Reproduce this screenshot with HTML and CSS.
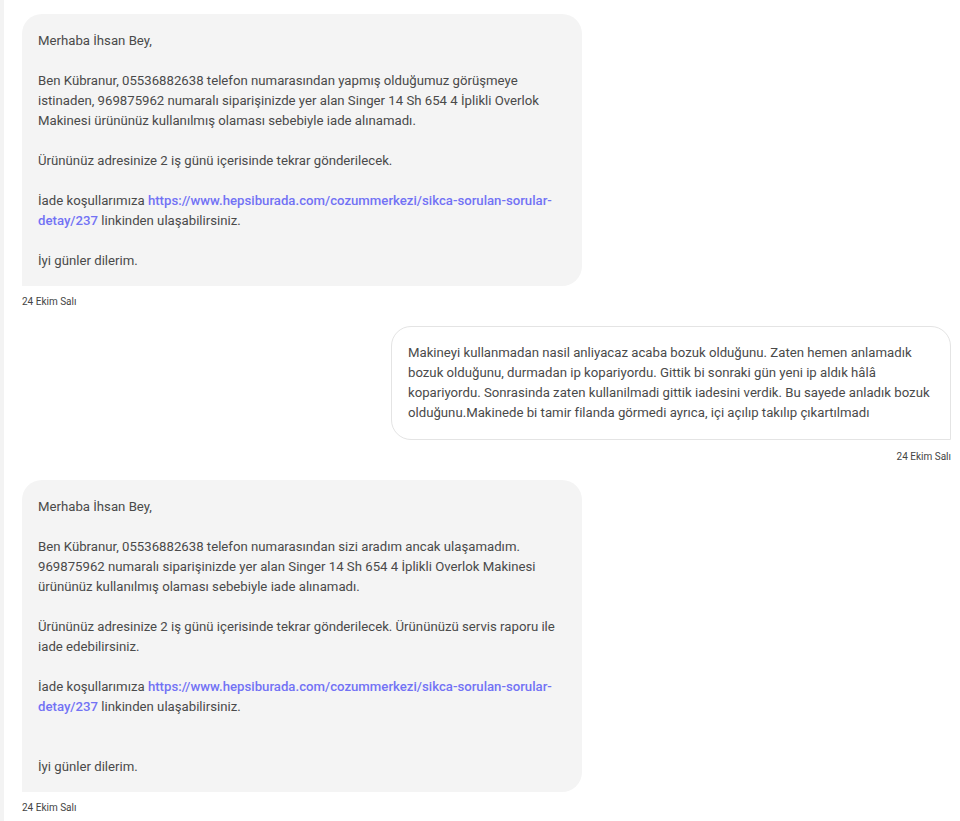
FILE: index.html
```html
<!DOCTYPE html>
<html lang="tr">
<head>
<meta charset="utf-8">
<title>Mesajlar</title>
<link rel="stylesheet" href="styles.css">
</head>
<body>
<div class="panel">
  <div class="thread">
    <div class="msg msg-in">
      <div class="bubble">Merhaba İhsan Bey,

Ben Kübranur, 05536882638 telefon numarasından yapmış olduğumuz görüşmeye istinaden, 969875962 numaralı siparişinizde yer alan Singer 14 Sh 654 4 İplikli Overlok Makinesi ürününüz kullanılmış olaması sebebiyle iade alınamadı.

Ürününüz adresinize 2 iş günü içerisinde tekrar gönderilecek.

İade koşullarımıza <a class="link" href="#">https://www.hepsiburada.com/cozummerkezi/sikca-sorulan-sorular-detay/237</a> linkinden ulaşabilirsiniz.

İyi günler dilerim.</div>
      <div class="time">24 Ekim Salı</div>
    </div>

    <div class="msg msg-out">
      <div class="bubble">Makineyi kullanmadan nasil anliyacaz acaba bozuk olduğunu. Zaten hemen anlamadık bozuk olduğunu, durmadan ip kopariyordu. Gittik bi sonraki gün yeni ip aldık hâlâ kopariyordu. Sonrasinda zaten kullanilmadi gittik iadesini verdik. Bu sayede anladık bozuk olduğunu.Makinede bi tamir filanda görmedi ayrıca, içi açılıp takılıp çıkartılmadı</div>
      <div class="time">24 Ekim Salı</div>
    </div>

    <div class="msg msg-in">
      <div class="bubble">Merhaba İhsan Bey,

Ben Kübranur, 05536882638 telefon numarasından sizi aradım ancak ulaşamadım. 969875962 numaralı siparişinizde yer alan Singer 14 Sh 654 4 İplikli Overlok Makinesi ürününüz kullanılmış olaması sebebiyle iade alınamadı.

Ürününüz adresinize 2 iş günü içerisinde tekrar gönderilecek. Ürününüzü servis raporu ile iade edebilirsiniz.

İade koşullarımıza <a class="link" href="#">https://www.hepsiburada.com/cozummerkezi/sikca-sorulan-sorular-detay/237</a> linkinden ulaşabilirsiniz.


İyi günler dilerim.</div>
      <div class="time">24 Ekim Salı</div>
    </div>
  </div>
</div>
</body>
</html>
```

FILE: styles.css
```css
html, body {
  margin: 0;
  padding: 0;
  background: #ffffff;
}

body {
  font-family: "Segoe UI", Roboto, Lato, sans-serif;
  color: #4a4a4a;
}

.panel {
  border-left: 4px solid #f3f3f3;
  min-height: 821px;
  box-sizing: border-box;
}

.thread {
  display: flex;
  flex-direction: column;
  padding: 14px 9px 0 18px;
}

.msg {
  display: flex;
  flex-direction: column;
  margin-bottom: 17px;
}

.msg-in {
  align-items: flex-start;
}

.msg-out {
  align-items: flex-end;
  margin-bottom: 16px;
}

.bubble {
  width: 560px;
  box-sizing: border-box;
  padding: 17px 16px 15px;
  font-size: 13.2px;
  line-height: 20px;
  white-space: pre-line;
}

.msg-in .bubble {
  background: #f4f4f4;
  border-radius: 20px 20px 20px 0;
}

.msg-out .bubble {
  padding-top: 16px;
  padding-bottom: 16px;
  background: #ffffff;
  border: 1px solid #e4e4e4;
  border-radius: 20px 20px 0 20px;
}

.link {
  color: #7272f4;
  font-weight: 500;
  text-decoration: none;
}

.time {
  margin-top: 9px;
  font-size: 10px;
  line-height: 14px;
  color: #444444;
}

.msg-out .time {
  margin-top: 10px;
}
```
